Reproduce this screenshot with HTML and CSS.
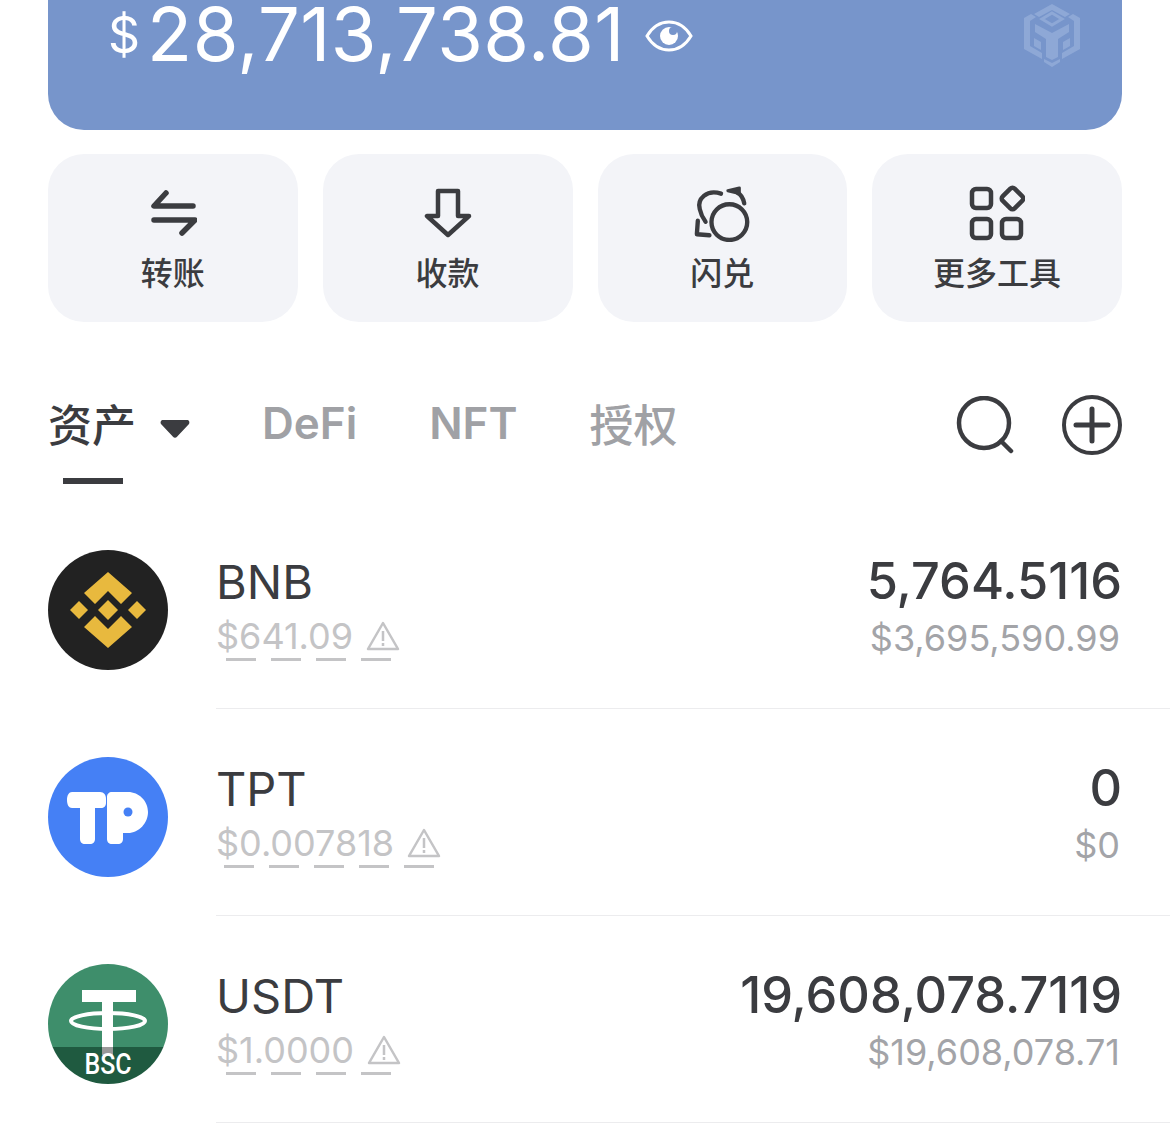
FILE: index.html
```html
<!DOCTYPE html>
<html lang="zh-CN">
<head>
    <meta charset="UTF-8">
    <title>钱包</title>
    <link rel="stylesheet" href="styles.css">
</head>
<body>
    <div class="page">
        <section class="hero">
            <span class="currency">$</span>
            <span class="balance">28,713,738.81</span>
            <svg class="eye" width="48" height="32" viewBox="0 0 48 32">
                <path d="M2 16C8 6 15 2 24 2s16 4 22 14c-6 10-13 14-22 14S8 26 2 16z" fill="none" stroke="#fff" stroke-width="3"/>
                <circle cx="24" cy="16" r="9" fill="#fff"/>
                <circle cx="28" cy="11" r="4" fill="#7795cb"/>
            </svg>
            <svg class="chain" width="56" height="65" viewBox="0 0 56 65">
                <g fill="#8ea8d6">
                    <path d="M10 12L28 2l18 10-5 3-13-7-13 7z"/>
                    <path d="M0 16l7-4 5 3-6 4v25l12 7v6L0 47z"/>
                    <path d="M56 16l-7-4-5 3 6 4v25l-12 7v6l18-10z"/>
                    <path d="M11 22l17 9 17-9v8l-11 7v18l-6 3-6-3V37l-11-7z"/>
                    <path d="M10 36l7 4v8l-7-4z"/>
                    <path d="M46 36l-7 4v8l7-4z"/>
                    <path d="M20 57l8 4 8-4v3l-8 5-8-5z"/>
                </g>
                <path d="M28 11l10 6-10 6-10-6z" fill="none" stroke="#8ea8d6" stroke-width="3"/>
            </svg>
        </section>

        <section class="actions">
            <div class="action">
                <svg width="48" height="48" viewBox="0 0 48 48" fill="none" stroke="#3b3c40" stroke-width="5.500" stroke-linecap="round" stroke-linejoin="round">
                    <path d="M17 4L5 17h39"/>
                    <path d="M5 31h41L33 44"/>
                </svg>
                <span class="action-label">转账</span>
            </div>
            <div class="action">
                <svg width="48" height="50" viewBox="0 0 48 50" fill="none" stroke="#3b3c40" stroke-width="4.500" stroke-linecap="round" stroke-linejoin="round">
                    <path d="M14 3h20v25h11L24 47 3 28h11z"/>
                </svg>
                <span class="action-label">收款</span>
            </div>
            <div class="action">
                <svg width="60" height="60" viewBox="-2 -2 60 60" fill="none" stroke="#3b3c40" stroke-width="4.500" stroke-linecap="round" stroke-linejoin="round">
                    <circle cx="35.600" cy="37.400" r="18.500"/>
                    <path d="M27 8C12 3 2 14 5 24c1 5 3 9 6 13"/>
                    <path d="M3 36l-1 14 13 1"/>
                    <path d="M46 2L34 5l12 3z" fill="#3b3c40" stroke-width="3"/>
                    <path d="M44 7c4 2 6 6 7 11"/>
                </svg>
                <span class="action-label">闪兑</span>
            </div>
            <div class="action">
                <svg width="56" height="56" viewBox="0 0 56 56" fill="none" stroke="#3b3c40" stroke-width="4.500" stroke-linejoin="round">
                    <rect x="3" y="4" width="19" height="19" rx="4"/>
                    <rect x="3" y="34" width="19" height="19" rx="4"/>
                    <rect x="33" y="34" width="19" height="19" rx="4"/>
                    <rect x="35" y="5" width="17" height="17" rx="3" transform="rotate(45 43.500 13.500)"/>
                </svg>
                <span class="action-label">更多工具</span>
            </div>
        </section>

        <nav class="tabs">
            <div class="tab tab-active">资产</div>
            <svg class="caret" width="30" height="20" viewBox="0 0 30 18" preserveAspectRatio="none"><path d="M3 1h24c2 0 3 2 2 3.500L17 16c-1 1.300-3 1.300-4 0L1 4.500C0 3 1 1 3 1z" fill="#3b3c40"/></svg>
            <div class="tab">DeFi</div>
            <div class="tab">NFT</div>
            <div class="tab tab-cjk">授权</div>
            <div class="tab-tools">
                <svg width="58" height="58" viewBox="0 0 58 58" fill="none" stroke="#3b3c40" stroke-width="4.500" stroke-linecap="round">
                    <circle cx="28" cy="27" r="25"/>
                    <path d="M45 45l10 10"/>
                </svg>
                <svg width="60" height="60" viewBox="0 0 60 60" fill="none" stroke="#3b3c40" stroke-width="4" stroke-linecap="round">
                    <circle cx="30" cy="30" r="28"/>
                    <path d="M14 30h32M30 14v32" stroke-width="5"/>
                </svg>
            </div>
        </nav>

        <ul class="assets">
            <li class="asset">
                <svg class="coin" width="120" height="120" viewBox="0 0 120 120">
                    <circle cx="60" cy="60" r="60" fill="#222"/>
                    <g fill="#e8b93e">
                        <path d="M60 22l24 21-11 11-13-13-13 13-11-11z"/>
                        <path d="M60 98l24-21-11-11-13 13-13-13-11 11z"/>
                        <path d="M60 50l10 10-10 10-10-10z"/>
                        <path d="M31 51l9 9-9 9-9-9z"/>
                        <path d="M89 51l9 9-9 9-9-9z"/>
                    </g>
                </svg>
                <div class="asset-main">
                    <div class="asset-name">BNB</div>
                    <div class="asset-price-wrap">
                        <div class="asset-price">$641.09
                            <svg class="warn" width="34" height="30" viewBox="0 0 34 30" fill="none" stroke="#c4c4c6" stroke-width="2.500"><path d="M17 2l15 26H2z" stroke-linejoin="round"/><path d="M17 10v10M17 22v3"/></svg>
                        </div>
                        <div class="dashes"><i></i><i></i><i></i><i></i></div>
                    </div>
                </div>
                <div class="asset-amounts">
                    <div class="amount">5,764.5116</div>
                    <div class="value">$3,695,590.99</div>
                </div>
            </li>
            <li class="asset">
                <svg class="coin" width="120" height="120" viewBox="0 0 120 120">
                    <circle cx="60" cy="60" r="60" fill="#4580f5"/>
                    <path d="M24 35h28c4 0 6 3 6 7v4c0 3-2 5-5 5h-6v31c0 3-2 5-5 5h-5c-3 0-5-2-5-5V51h-8c-3 0-5-3-5-8s2-8 5-8z" fill="#fff"/>
                    <path d="M64 35h16c11 0 20 9 20 20s-9 21-20 21h-5v6c0 3-2 5-5 5h-6c-3 0-5-2-5-5V40c0-3 2-5 5-5z" fill="#fff"/>
                    <circle cx="80" cy="55" r="4.500" fill="#4580f5"/>
                </svg>
                <div class="asset-main">
                    <div class="asset-name">TPT</div>
                    <div class="asset-price-wrap">
                        <div class="asset-price">$0.007818
                            <svg class="warn" width="34" height="30" viewBox="0 0 34 30" fill="none" stroke="#c4c4c6" stroke-width="2.500"><path d="M17 2l15 26H2z" stroke-linejoin="round"/><path d="M17 10v10M17 22v3"/></svg>
                        </div>
                        <div class="dashes"><i></i><i></i><i></i><i></i><i></i></div>
                    </div>
                </div>
                <div class="asset-amounts">
                    <div class="amount">0</div>
                    <div class="value">$0</div>
                </div>
            </li>
            <li class="asset">
                <svg class="coin" width="120" height="120" viewBox="0 0 120 120">
                    <clipPath id="usdtClip"><circle cx="60" cy="60" r="60"/></clipPath>
                    <g clip-path="url(#usdtClip)">
                        <rect width="120" height="83" fill="#3e8e6b"/>
                        <rect y="83" width="120" height="37" fill="#1f5a40"/>
                        <rect x="34" y="26" width="54" height="12" fill="#fff"/>
                        <rect x="54" y="26" width="11" height="57" fill="#fff"/>
                        <rect x="54" y="83" width="11" height="8" fill="#9a9a9a"/>
                        <ellipse cx="60" cy="57" rx="37" ry="8" fill="none" stroke="#fff" stroke-width="4"/>
                        <text class="bsc" x="60" y="110" text-anchor="middle" textLength="47" lengthAdjust="spacingAndGlyphs">BSC</text>
                    </g>
                </svg>
                <div class="asset-main">
                    <div class="asset-name">USDT</div>
                    <div class="asset-price-wrap">
                        <div class="asset-price">$1.0000
                            <svg class="warn" width="34" height="30" viewBox="0 0 34 30" fill="none" stroke="#c4c4c6" stroke-width="2.500"><path d="M17 2l15 26H2z" stroke-linejoin="round"/><path d="M17 10v10M17 22v3"/></svg>
                        </div>
                        <div class="dashes"><i></i><i></i><i></i><i></i></div>
                    </div>
                </div>
                <div class="asset-amounts">
                    <div class="amount">19,608,078.7119</div>
                    <div class="value">$19,608,078.71</div>
                </div>
            </li>
        </ul>
    </div>
</body>
</html>
```

FILE: styles.css
```css
* {
    box-sizing: border-box;
}
body {
    margin: 0;
    background: #fff;
    color: #3b3c40;
    font-family: Inter, "Noto Sans CJK SC", sans-serif;
}
.page {
    height: 1126px;
    overflow: hidden;
}
.hero {
    display: flex;
    align-items: center;
    height: 130px;
    margin: 0 48px;
    padding: 0 42px 62px 60px;
    background: #7795cb;
    border-radius: 0 0 36px 36px;
    color: #fff;
}
.currency {
    font-size: 50px;
    line-height: 66px;
    margin-right: 7px;
    margin-top: 2px;
}
.balance {
    font-size: 74px;
    line-height: 66px;
    letter-spacing: 0.45px;
}
.eye {
    margin-left: 20px;
    margin-top: 4px;
}
.chain {
    margin-left: auto;
}
.actions {
    display: grid;
    grid-template-columns: repeat(4, 1fr);
    gap: 25px;
    margin: 24px 48px 0;
}
.action {
    display: flex;
    flex-direction: column;
    align-items: center;
    justify-content: flex-start;
    height: 168px;
    padding-top: 30px;
    background: #f3f4f8;
    border-radius: 36px;
}
.action svg {
    height: 58px;
}
.action-label {
    margin-top: 10px;
    font-size: 32px;
    font-weight: 500;
    line-height: 44px;
}
.tabs {
    display: flex;
    align-items: center;
    gap: 72px;
    height: 60px;
    margin: 71px 48px 0;
}
.tab {
    position: relative;
    font-size: 44px;
    font-weight: 600;
    color: #a0a1a5;
}
.tab-cjk {
    font-weight: 500;
}
.tab-active {
    color: #3b3c40;
    font-weight: 500;
}
.tab-active::after {
    content: "";
    position: absolute;
    left: 15px;
    bottom: -29px;
    width: 60px;
    height: 6px;
    background: #3b3c40;
}
.caret {
    margin-left: -48px;
    margin-top: 12px;
}
.tab-tools {
    display: flex;
    align-items: center;
    gap: 48px;
    margin-left: auto;
    margin-top: 3px;
}
.assets {
    list-style: none;
    margin: 49px 0 0;
    padding: 0;
}
.asset {
    display: flex;
    align-items: center;
    height: 207px;
    margin-left: 216px;
    padding: 0 48px 0 0;
    border-bottom: 1px solid #ececee;
    position: relative;
}
.coin {
    position: absolute;
    left: -168px;
    top: 48px;
}
.asset-main {
    flex: 1;
    padding-top: 4px;
}
.asset-name {
    font-size: 47px;
    line-height: 56px;
    margin-bottom: 4px;
}
.asset-price-wrap {
    display: inline-flex;
    flex-direction: column;
}
.asset-price {
    display: flex;
    align-items: center;
    gap: 13px;
    font-size: 36px;
    line-height: 44px;
    color: #c4c4c6;
}
.dashes {
    display: flex;
    justify-content: center;
    gap: 15px;
}
.dashes i {
    width: 30px;
    height: 3px;
    background: #c4c4c6;
}
.asset-amounts {
    padding-top: 3px;
    text-align: right;
}
.amount {
    font-size: 50.500px;
    font-weight: 500;
    line-height: 56px;
    margin-bottom: 7px;
}
.value {
    padding-right: 2px;
    font-size: 36px;
    line-height: 44px;
    color: #a3a4a8;
}
.bsc {
    font-family: Roboto, sans-serif;
    font-size: 30px;
    font-weight: 500;
    fill: #fff;
}
```
